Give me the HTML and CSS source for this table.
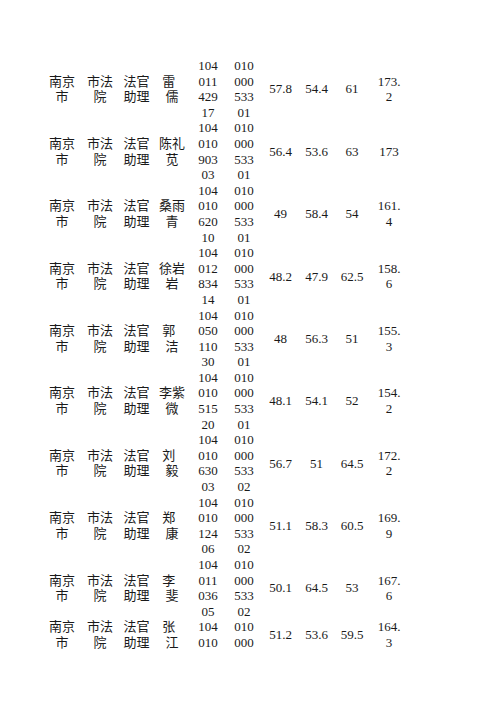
FILE: index.html
```html
<!DOCTYPE html>
<html lang="zh-CN">
<head>
<meta charset="utf-8">
<title>名单</title>
<link rel="stylesheet" href="styles.css">
</head>
<body>
<table class="sheet">
  <colgroup>
    <col class="c-city"><col class="c-org"><col class="c-post"><col class="c-name">
    <col class="c-id"><col class="c-id">
    <col class="c-v1"><col class="c-v2"><col class="c-v3"><col class="c-v4">
  </colgroup>
  <tbody>
    <tr><td>南京市</td><td>市法院</td><td>法官助理</td><td class="name">雷 儒</td><td class="id">10401142917</td><td class="id">01000053301</td><td>57.8</td><td>54.4</td><td>61</td><td>173.2</td></tr>
    <tr><td>南京市</td><td>市法院</td><td>法官助理</td><td class="name">陈礼苋</td><td class="id">10401090303</td><td class="id">01000053301</td><td>56.4</td><td>53.6</td><td>63</td><td>173</td></tr>
    <tr><td>南京市</td><td>市法院</td><td>法官助理</td><td class="name">桑雨青</td><td class="id">10401062010</td><td class="id">01000053301</td><td>49</td><td>58.4</td><td>54</td><td>161.4</td></tr>
    <tr><td>南京市</td><td>市法院</td><td>法官助理</td><td class="name">徐岩岩</td><td class="id">10401283414</td><td class="id">01000053301</td><td>48.2</td><td>47.9</td><td>62.5</td><td>158.6</td></tr>
    <tr><td>南京市</td><td>市法院</td><td>法官助理</td><td class="name">郭 洁</td><td class="id">10405011030</td><td class="id">01000053301</td><td>48</td><td>56.3</td><td>51</td><td>155.3</td></tr>
    <tr><td>南京市</td><td>市法院</td><td>法官助理</td><td class="name">李紫微</td><td class="id">10401051520</td><td class="id">01000053301</td><td>48.1</td><td>54.1</td><td>52</td><td>154.2</td></tr>
    <tr><td>南京市</td><td>市法院</td><td>法官助理</td><td class="name">刘 毅</td><td class="id">10401063003</td><td class="id">01000053302</td><td>56.7</td><td>51</td><td>64.5</td><td>172.2</td></tr>
    <tr><td>南京市</td><td>市法院</td><td>法官助理</td><td class="name">郑 康</td><td class="id">10401012406</td><td class="id">01000053302</td><td>51.1</td><td>58.3</td><td>60.5</td><td>169.9</td></tr>
    <tr><td>南京市</td><td>市法院</td><td>法官助理</td><td class="name">李 斐</td><td class="id">10401103605</td><td class="id">01000053302</td><td>50.1</td><td>64.5</td><td>53</td><td>167.6</td></tr>
    <tr><td>南京市</td><td>市法院</td><td>法官助理</td><td class="name">张 江</td><td class="id">104010</td><td class="id">010000</td><td>51.2</td><td>53.6</td><td>59.5</td><td>164.3</td></tr>
  </tbody>
</table>
</body>
</html>
```

FILE: styles.css
```css
html, body {
  margin: 0;
  padding: 0;
  background: #ffffff;
}

body {
  font-family: "Liberation Serif", "Noto Sans CJK SC", serif;
  font-size: 13px;
  line-height: 15.6px;
  color: #1a1a1a;
}

.sheet {
  margin: 58px 0 0 43px;
  border-collapse: collapse;
  border-spacing: 0;
  table-layout: fixed;
  width: 365px;
}

.c-city { width: 38px; }
.c-org  { width: 38px; }
.c-post { width: 35px; }
.c-name { width: 36px; }
.c-id   { width: 36px; }
.c-v1   { width: 37px; }
.c-v2   { width: 35px; }
.c-v3   { width: 36px; }
.c-v4   { width: 38px; }

.sheet td {
  padding: 0 4px;
  text-align: center;
  vertical-align: middle;
  word-break: break-all;
  overflow-wrap: anywhere;
}

.sheet td.id {
  padding: 0 7px;
}

.sheet td.name {
  white-space: break-spaces;
  word-spacing: 3px;
}

.sheet td:nth-child(n+7) {
  padding: 0 5px;
}
```
